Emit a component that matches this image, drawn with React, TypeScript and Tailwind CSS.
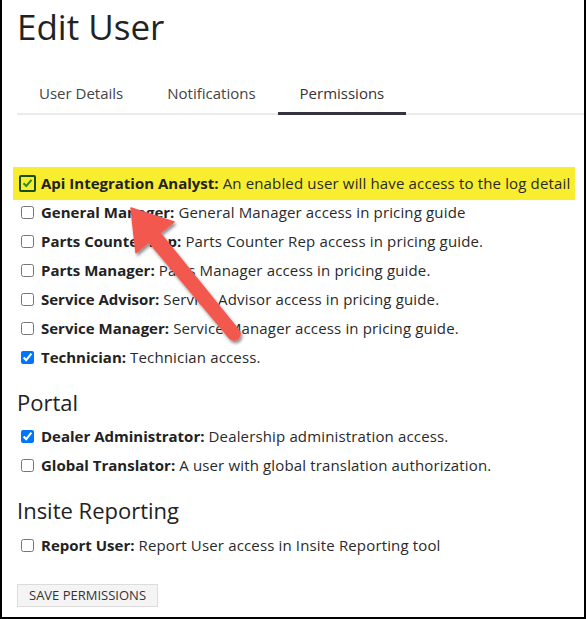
import React from "react";

type Permission = {
  name: string;
  description: string;
  checked?: boolean;
};

const general: Array<Permission> = [
  { name: "General Manager", description: "General Manager access in pricing guide" },
  { name: "Parts Counter Rep", description: "Parts Counter Rep access in pricing guide." },
  { name: "Parts Manager", description: "Parts Manager access in pricing guide." },
  { name: "Service Advisor", description: "Service Advisor access in pricing guide." },
  { name: "Service Manager", description: "Service Manager access in pricing guide." },
  { name: "Technician", description: "Technician access.", checked: true },
];

const portal: Array<Permission> = [
  { name: "Dealer Administrator", description: "Dealership administration access.", checked: true },
  { name: "Global Translator", description: "A user with global translation authorization." },
];

const reporting: Array<Permission> = [
  { name: "Report User", description: "Report User access in Insite Reporting tool" },
];

function PermissionRow({ name, description, checked }: Permission) {
  return (
    <label className="flex h-[29px] items-center gap-[7px] pl-[4px] text-[15px] tracking-[0.15px] text-[#2a2a2a]">
      <input type="checkbox" readOnly checked={!!checked} className="m-0 size-[13px] accent-[#0075ff]" />
      <span>
        <b className="font-bold tracking-normal text-[#222]">{name}:</b> {description}
      </span>
    </label>
  );
}

function Arrow() {
  return (
    <svg className="pointer-events-none absolute left-0 top-0" width="586" height="619" viewBox="0 0 586 619">
      <defs>
        <filter id="shadow" x="-20%" y="-20%" width="140%" height="140%">
          <feDropShadow dx="1.5" dy="2.5" stdDeviation="1.5" floodColor="#000" floodOpacity="0.45" />
        </filter>
      </defs>
      <path
        d="M129 208 L172 222 L158 233 L236.7 330.2 A6 6 0 0 1 227.3 337.8 L147 242 L134 252.6 Z"
        fill="#f2584e"
        stroke="#f2584e"
        strokeWidth="1.5"
        strokeLinejoin="round"
        filter="url(#shadow)"
      />
    </svg>
  );
}

export default function App() {
  const tabs = ["User Details", "Notifications", "Permissions"];

  return (
    <div
      className="relative h-[619px] w-[586px] overflow-hidden border-x-2 border-b-2 border-black bg-white pl-[15px] pr-0"
      style={{ fontFamily: '"Open Sans", "Liberation Sans", sans-serif' }}
    >
      <h1 className="pt-[7px] text-[35px] leading-[40px] font-normal text-[#222]">Edit User</h1>

      <div className="mt-[33px] flex border-b-2 border-[#ebebeb]">
        {tabs.map((tab) => (
          <div
            key={tab}
            className={
              tab === "Permissions"
                ? "-mb-[2px] border-b-[3px] border-[#33343d] px-[22px] pb-[7px] pt-[2px] text-[15px] text-[#333]"
                : "px-[22px] pb-[8px] pt-[2px] text-[15px] text-[#444]"
            }
          >
            {tab}
          </div>
        ))}
      </div>

      <div className="mt-[54px]">
        <div className="relative">
          <div className="absolute -top-[2px] -left-[4px] h-[33px] w-[562px] bg-[#f8ee2f]" />
          <label className="relative flex h-[29px] items-center gap-[5px] pl-[2px] text-[15px] tracking-[0.15px] text-[#2a2a2a]">
            <span className="flex size-[17px] items-center justify-center rounded-[2px] border-2 border-[#174f17] bg-[#f8ee2f]">
              <svg width="11" height="10" viewBox="0 0 11 10">
                <path d="M1.5 5.2 L4.3 8 L9.5 1.8" fill="none" stroke="#2f8a22" strokeWidth="2" />
              </svg>
            </span>
            <span>
              <b className="font-bold tracking-normal text-[#222]">Api Integration Analyst:</b> An enabled user will
              have access to the log detail
            </span>
          </label>
        </div>
        {general.map((p) => (
          <PermissionRow key={p.name} {...p} />
        ))}
      </div>

      <h2 className="mt-[15px] text-[22px] leading-[30px] text-[#222]">Portal</h2>
      <div className="mt-[5px]">
        {portal.map((p) => (
          <PermissionRow key={p.name} {...p} />
        ))}
      </div>

      <h2 className="mt-[15px] text-[22px] leading-[30px] text-[#222]">Insite Reporting</h2>
      <div className="mt-[6px]">
        {reporting.map((p) => (
          <PermissionRow key={p.name} {...p} />
        ))}
      </div>

      <button className="mt-[24px] border border-[#dcdcdc] bg-[#f4f4f4] px-[11px] py-[3px] text-[13px] leading-[15px] text-[#333]">
        SAVE PERMISSIONS
      </button>

      <Arrow />
    </div>
  );
}
